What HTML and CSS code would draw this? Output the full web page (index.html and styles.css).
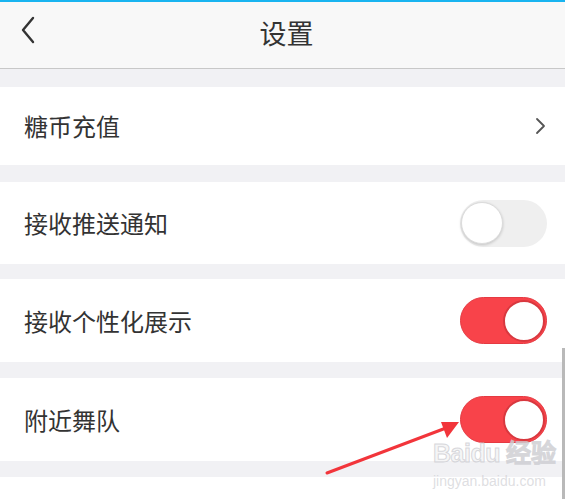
FILE: index.html
```html
<!DOCTYPE html>
<html lang="zh-CN">
<head>
<meta charset="utf-8">
<title>设置</title>
<link rel="stylesheet" href="styles.css">
</head>
<body>
<div class="page">
  <header class="header">
    <svg class="back" width="16" height="28" viewBox="0 0 16 28"><path d="M13 2 L3 14 L13 26" fill="none" stroke="#333" stroke-width="2.4" stroke-linecap="round" stroke-linejoin="round"/></svg>
    <h1 class="title">设置</h1>
  </header>
  <main class="list">
    <div class="row row-first">
      <span class="label">糖币充值</span>
      <svg class="chev" width="12" height="18" viewBox="0 0 12 18"><path d="M2 2 L9 9 L2 16" fill="none" stroke="#555" stroke-width="1.8" stroke-linecap="round" stroke-linejoin="round"/></svg>
    </div>
    <div class="row row-b">
      <span class="label">接收推送通知</span>
      <span class="toggle off"><span class="knob"></span></span>
    </div>
    <div class="row row-c">
      <span class="label">接收个性化展示</span>
      <span class="toggle on"><span class="knob"></span></span>
    </div>
    <div class="row row-c">
      <span class="label">附近舞队</span>
      <span class="toggle on"><span class="knob"></span></span>
    </div>
  </main>
  <svg class="arrow" width="565" height="499" viewBox="0 0 565 499">
    <path d="M327 473 L446 428" stroke="#f2353b" stroke-width="3" stroke-linecap="round"/>
    <path d="M459 422 L441 422 L447 438 Z" fill="#f2353b"/>
  </svg>
  <div class="watermark">
    <div class="wm-main">Baidu 经验</div>
    <div class="wm-url">jingyan.baidu.com</div>
  </div>
  <div class="scrollbar"></div>
</div>
</body>
</html>
```
FILE: styles.css
```css
html, body {
  margin: 0;
  padding: 0;
  background: #ffffff;
}
body {
  font-family: "Noto Sans CJK SC", "Noto Sans", sans-serif;
  color: #333;
}
.page {
  position: relative;
  width: 565px;
  height: 499px;
  overflow: hidden;
}
.header {
  height: 66px;
  border-top: 2px solid #19b4f0;
  border-bottom: 1px solid #c8c8c8;
  background: #f8f8f8;
  display: flex;
  align-items: center;
  justify-content: center;
  position: relative;
  box-sizing: content-box;
}
.back {
  position: absolute;
  left: 20px;
  top: 14px;
}
.title {
  margin: 0 0 6px 8px;
  font-size: 27px;
  font-weight: 400;
  color: #333;
  line-height: 1;
}
.list {
  background: #f1f1f4;
  padding-top: 18px;
  padding-bottom: 16px;
  display: flex;
  flex-direction: column;
}
.row {
  background: #ffffff;
  display: flex;
  align-items: center;
  justify-content: space-between;
  padding: 0 17px 0 24px;
}
.row-first {
  height: 78px;
}
.row-b {
  height: 82px;
  margin-top: 17px;
}
.row-c {
  height: 83px;
  margin-top: 15px;
}
.row-c + .row-c {
  margin-top: 16px;
}
.label {
  font-size: 24px;
  line-height: 1;
  color: #333;
}
.chev {
  margin-right: 1px;
}
.toggle {
  width: 87px;
  height: 47px;
  border-radius: 24px;
  box-sizing: border-box;
  display: flex;
  align-items: center;
  margin-right: 1px;
}
.toggle.off {
  background: #efefef;
  justify-content: flex-start;
}
.toggle.on {
  background: #f8434a;
  justify-content: flex-end;
  border: 1px solid #e53a42;
}
.knob {
  width: 42px;
  height: 42px;
  border-radius: 50%;
  background: #ffffff;
  box-sizing: border-box;
}
.toggle.off .knob {
  border: 1px solid #dcdcdc;
  box-shadow: 0 1px 3px rgba(0,0,0,0.18);
  margin-left: 1px;
}
.toggle.on .knob {
  border: 2px solid #d8383f;
  margin-right: 1px;
}
.arrow {
  position: absolute;
  left: 0;
  top: 0;
  pointer-events: none;
}
.watermark {
  position: absolute;
  left: 433px;
  top: 439px;
  font-family: "Liberation Sans", sans-serif;
  pointer-events: none;
}
.wm-main {
  font-size: 25px;
  font-weight: 700;
  line-height: 29px;
  letter-spacing: -0.5px;
  color: rgba(235, 235, 238, 0.5);
  -webkit-text-stroke: 1px rgba(200, 200, 205, 0.7);
}
.wm-url {
  font-size: 14px;
  line-height: 17px;
  margin-top: 5px;
  color: rgba(200, 200, 205, 0.6);
}
.scrollbar {
  position: absolute;
  right: 0;
  top: 348px;
  width: 3px;
  height: 151px;
  background: #b9b9b9;
}
```
